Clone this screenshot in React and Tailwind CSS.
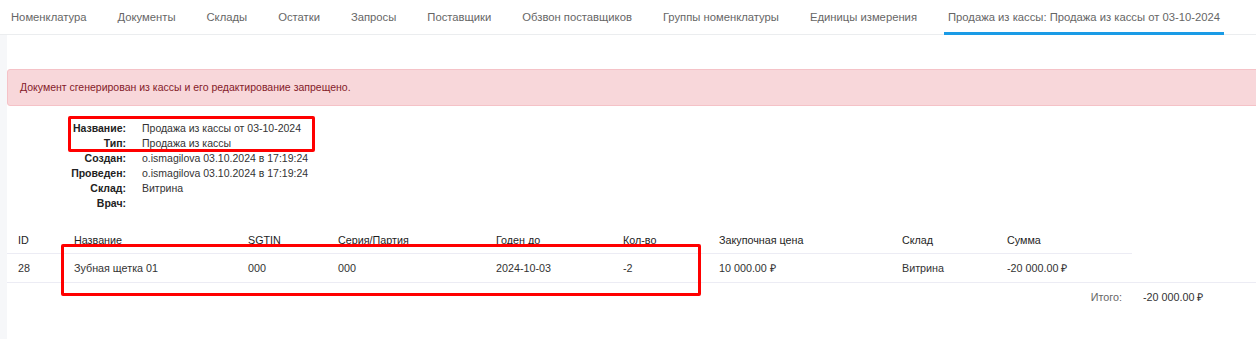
import React from 'react';

const tabs = [
  'Номенклатура',
  'Документы',
  'Склады',
  'Остатки',
  'Запросы',
  'Поставщики',
  'Обзвон поставщиков',
  'Группы номенклатуры',
  'Единицы измерения',
  'Продажа из кассы: Продажа из кассы от 03-10-2024',
];

const info = [
  ['Название:', 'Продажа из кассы от 03-10-2024'],
  ['Тип:', 'Продажа из кассы'],
  ['Создан:', 'o.ismagilova 03.10.2024 в 17:19:24'],
  ['Проведен:', 'o.ismagilova 03.10.2024 в 17:19:24'],
  ['Склад:', 'Витрина'],
  ['Врач:', ''],
];

const cols = [
  { title: 'ID', w: 'w-[56px]' },
  { title: 'Название', w: 'w-[174px]' },
  { title: 'SGTIN', w: 'w-[90px]' },
  { title: 'Серия/Партия', w: 'w-[158px]' },
  { title: 'Годен до', w: 'w-[127px]' },
  { title: 'Кол-во', w: 'w-[96px]' },
  { title: 'Закупочная цена', w: 'w-[183px]' },
  { title: 'Склад', w: 'w-[105px]' },
  { title: 'Сумма', w: 'w-[136px]' },
];

const row = ['28', 'Зубная щетка 01', '000', '000', '2024-10-03', '-2', '10 000.00 ₽', 'Витрина', '-20 000.00 ₽'];

export default function App() {
  return (
    <div className="relative min-h-[339px] bg-[#f6f7f9] font-['Liberation_Sans',Arial,sans-serif] overflow-hidden">
      {/* tabs */}
      <div className="flex h-[35px] bg-white border-b border-[#ebedef] pl-[7px] gap-[23px] text-[11.25px] text-[#666]">
        {tabs.map((t, i) => (
          <div
            key={t}
            className={
              'px-1 flex items-center whitespace-nowrap ' +
              (i === tabs.length - 1 ? 'border-b-[3px] border-[#1a9be6] pt-[3px] -mb-px' : '')
            }
          >
            {t}
          </div>
        ))}
      </div>

      <div className="ml-[7px] bg-white pt-[34px] pb-8 w-[1260px]">
        {/* alert */}
        <div className="h-[37px] flex items-center px-3 bg-[#f8d7da] border border-[#f5c2c7] rounded-[3px] text-[10.5px] text-[#842029]">
          Документ сгенерирован из кассы и его редактирование запрещено.
        </div>

        {/* info */}
        <div className="grid grid-cols-[119px_1fr] gap-x-4 mt-[15px] text-[10.5px] leading-[15px] text-[#333]">
          {info.map(([k, v]) => (
            <React.Fragment key={k}>
              <div className="text-right font-bold text-[#222]">{k}</div>
              <div className="h-[15px]">{v}</div>
            </React.Fragment>
          ))}
        </div>

        {/* table */}
        <div className="mt-[16px] text-[10.75px]">
          <div className="flex w-[1125px] h-[27px] items-center border-b border-[#ececf4] text-[#1e1e1e]">
            {cols.map((c) => (
              <div key={c.title} className={c.w + ' pl-[11px] pt-[1px]'}>
                {c.title}
              </div>
            ))}
          </div>
          <div className="flex h-[29px] items-center border-b border-[#ececf4] text-[#333]">
            {cols.map((c, i) => (
              <div key={c.title} className={c.w + ' pl-[11px] whitespace-nowrap'}>
                {row[i]}
              </div>
            ))}
          </div>
          <div className="flex h-[28px] items-center">
            <div className="w-[1115px] text-right text-[#666]">Итого:</div>
            <div className="pl-[21px] text-[#333] whitespace-nowrap">-20 000.00 ₽</div>
          </div>
        </div>
      </div>

      {/* red annotation frames */}
      <div className="absolute left-[68px] top-[116px] w-[247px] h-[36px] border-[3px] border-[#ff0000] rounded-[2px]" />
      <div className="absolute left-[61px] top-[244px] w-[640px] h-[52px] border-[3px] border-[#ff0000] rounded-[2px]" />
    </div>
  );
}
